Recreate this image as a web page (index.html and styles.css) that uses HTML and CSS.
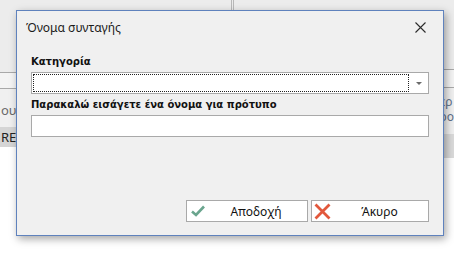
FILE: index.html
```html
<!DOCTYPE html>
<html lang="el">

<head>
    <meta charset="UTF-8">
    <meta name="viewport" content="width=device-width, initial-scale=1.0">
    <title>Όνομα συνταγής</title>
    <link rel="stylesheet" href="styles.css">
</head>

<body>

    <!-- the application behind the dialog -->
    <div class="app">
        <div class="pane pane-left">
            <div class="toolbar"></div>
            <div class="grid-head"></div>
            <div class="grid-row">ουσία</div>
            <div class="status">RELATED</div>
        </div>
        <div class="pane pane-mid">
            <div class="splitter"></div>
        </div>
        <div class="pane pane-right">
            <div class="toolbar toolbar-short"></div>
            <div class="grid-head grid-head-right"></div>
            <div class="grid-row grid-row-right">
                <div class="cell-line">ερ</div>
                <div class="cell-line">ρο</div>
            </div>
            <div class="status status-right"></div>
        </div>
    </div>

    <!-- modal dialog -->
    <div class="dialog">
        <div class="dialog-title">
            <span>Όνομα συνταγής</span>
            <svg class="close-icon" width="11" height="11" viewBox="0 0 11 11">
                <path d="M0.5 0.5 L10.5 10.5 M10.5 0.5 L0.5 10.5" stroke="#2b2b2b" stroke-width="1.1" fill="none"/>
            </svg>
        </div>

        <div class="dialog-body">
            <label class="field-label">Κατηγορία</label>
            <div class="combo">
                <div class="combo-focus"></div>
                <div class="combo-arrow"></div>
            </div>

            <label class="field-label label-second">Παρακαλώ εισάγετε ένα όνομα για πρότυπο</label>
            <div class="textbox"></div>

            <div class="buttons">
                <button class="btn btn-ok">
                    <svg class="btn-icon" width="14" height="12" viewBox="0 0 14 12">
                        <path d="M1 6.5 L5 10 L13 1.5" stroke="#6aa58e" stroke-width="2.6" fill="none"/>
                    </svg>
                    <span class="btn-text">Αποδοχή</span>
                </button>
                <button class="btn btn-cancel">
                    <svg class="btn-icon" width="17" height="17" viewBox="0 0 17 17">
                        <path d="M1.5 1.5 L15.5 15.5 M15.5 1.5 L1.5 15.5" stroke="#e2583c" stroke-width="2.8" fill="none"/>
                    </svg>
                    <span class="btn-text">Άκυρο</span>
                </button>
            </div>
        </div>
    </div>

</body>

</html>
```

FILE: styles.css
```css
body {
    margin: 0;
    padding: 0;
    width: 454px;
    height: 260px;
    background: #ffffff;
    font-family: "Noto Sans", "Liberation Sans", sans-serif;
    position: relative;
    overflow: hidden;
}

/* background application */
.app {
    display: flex;
    height: 160px;
}

.pane {
    display: flex;
    flex-direction: column;
}

.pane-left {
    width: 236px;
}

.pane-mid {
    width: 5px;
    background: #ececec;
}

.splitter {
    height: 12px;
    border-left: 1px solid #b8b8b8;
    border-right: 1px solid #b8b8b8;
    width: 1px;
}

.pane-right {
    flex: 1;
}

.toolbar {
    height: 72px;
    background: #ececec;
    border-bottom: 1px solid #a9a9a9;
}

.toolbar-short {
    height: 69px;
}

.grid-head {
    height: 15px;
    background: #f4f4f4;
    border-bottom: 1px solid #a9a9a9;
}

.grid-head-right {
    height: 17px;
}

.grid-row {
    height: 38px;
    background: #f0f0f0;
    color: #6a6a6a;
    font-size: 13px;
    line-height: 42px;
    white-space: nowrap;
    padding-left: 1px;
}

.grid-row-right {
    height: 46px;
    padding: 6px 0 0 204px;
    box-sizing: border-box;
    color: #5d6f8a;
    font-size: 12px;
    line-height: normal;
}

.cell-line {
    height: 15px;
    line-height: 15px;
    overflow: hidden;
}

.status {
    height: 20px;
    background: #d5d5d5;
    color: #222;
    font-size: 13px;
    line-height: 20px;
    white-space: nowrap;
    padding-left: 1px;
}

.status-right {
    height: 24px;
    background: #dadada;
}

/* dialog */
.dialog {
    position: absolute;
    left: 16px;
    top: 10px;
    width: 428px;
    height: 226px;
    box-sizing: border-box;
    background: #f0f0f0;
    border: 1px solid #5f82bd;
    box-shadow: 2px 3px 8px rgba(0, 0, 0, 0.35);
    display: flex;
    flex-direction: column;
}

.dialog-title {
    height: 33px;
    display: flex;
    align-items: center;
    justify-content: space-between;
    padding: 0 17px 0 9px;
    font-size: 12px;
    color: #1b1b1b;
}

.close-icon {
    display: block;
}

.dialog-body {
    flex: 1;
    display: flex;
    flex-direction: column;
    padding: 11px 14px 13px 14px;
}

.field-label {
    font-family: "DejaVu Sans", sans-serif;
    font-weight: bold;
    font-size: 10px;
    line-height: 14px;
    color: #111;
    margin-bottom: 3px;
}

.label-second {
    margin-top: 4px;
}

.combo {
    height: 22px;
    box-sizing: border-box;
    background: #fff;
    border: 1px solid #a9a9a9;
    display: flex;
    align-items: center;
    padding: 1px;
}

.combo-focus {
    flex: 1;
    align-self: stretch;
    border: 1px dotted #222;
    margin-right: 2px;
}

.combo-arrow {
    width: 0;
    height: 0;
    margin: 0 5px 0 5px;
    border-left: 3px solid transparent;
    border-right: 3px solid transparent;
    border-top: 3px solid #6b6b6b;
}

.textbox {
    height: 22px;
    box-sizing: border-box;
    background: #fff;
    border: 1px solid #a9a9a9;
}

.buttons {
    margin-top: auto;
    display: flex;
    justify-content: flex-end;
    gap: 3px;
}

.btn {
    height: 22px;
    box-sizing: border-box;
    background: #fff;
    border: 1px solid #a9a9a9;
    display: flex;
    align-items: center;
    padding: 0 0 0 4px;
    font-family: "Noto Sans", "Liberation Sans", sans-serif;
    font-size: 12px;
    color: #111;
}

.btn-ok {
    width: 122px;
}

.btn-cancel {
    width: 118px;
    padding-left: 2px;
}

.btn-icon {
    display: block;
}

.btn-text {
    flex: 1;
    text-align: center;
}
```
